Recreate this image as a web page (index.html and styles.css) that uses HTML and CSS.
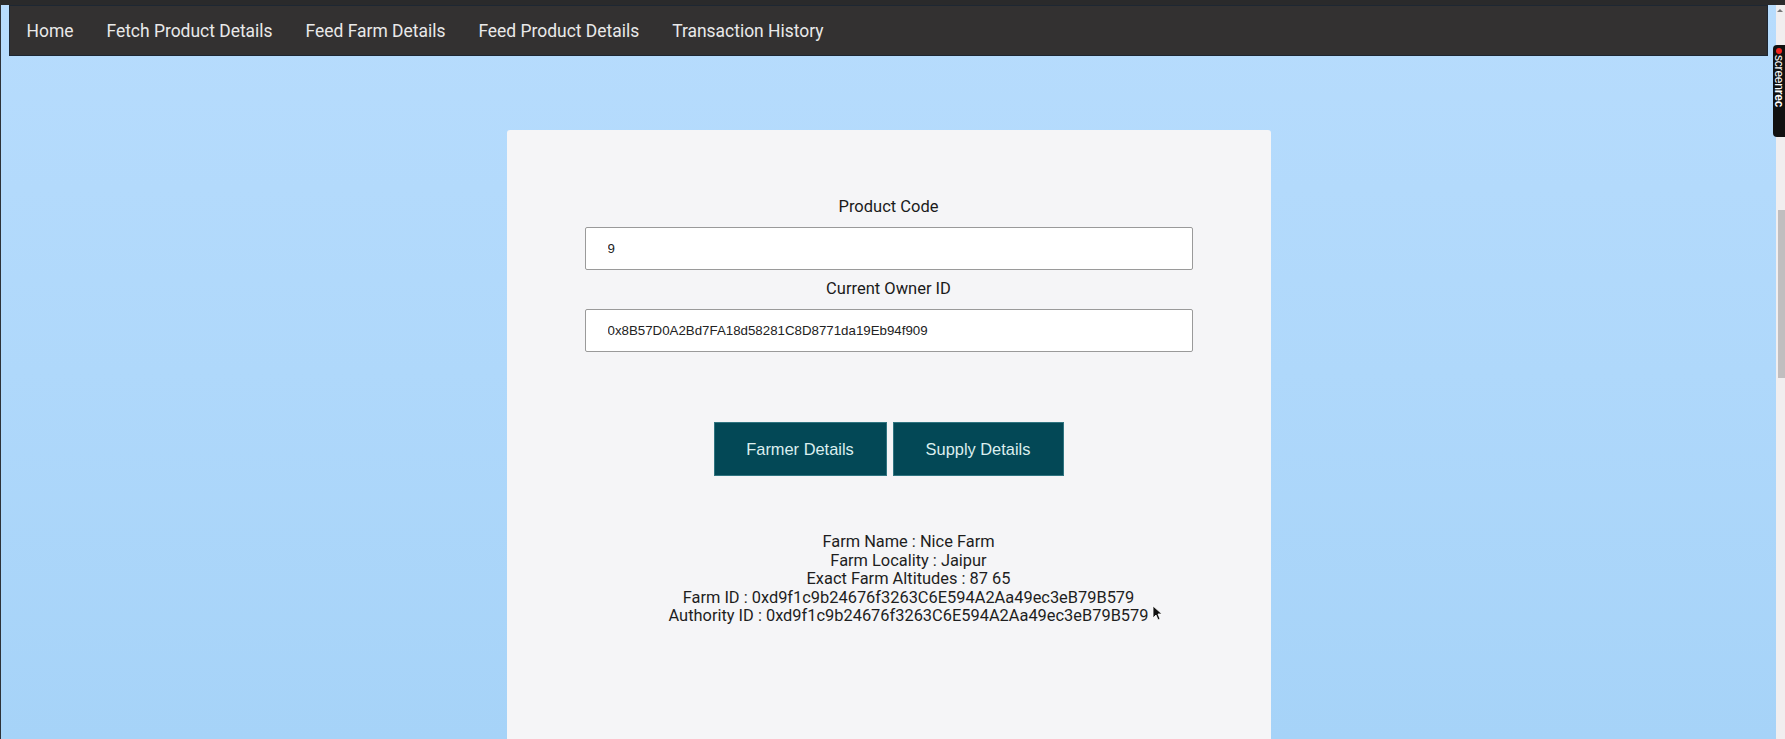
FILE: index.html
```html
<!DOCTYPE html>
<html lang="en">
<head>
<meta charset="utf-8">
<title>Farm Details</title>
<link rel="stylesheet" href="styles.css">
</head>
<body>
<div class="topstrip"></div>
<div class="window">
  <main class="page">
    <nav class="navbar">
      <a class="nav-link" href="#">Home</a>
      <a class="nav-link" href="#">Fetch Product Details</a>
      <a class="nav-link" href="#">Feed Farm Details</a>
      <a class="nav-link" href="#">Feed Product Details</a>
      <a class="nav-link" href="#">Transaction History</a>
    </nav>
    <section class="card">
      <form class="form">
        <label class="field-label" for="code">Product Code</label>
        <input class="field-input" id="code" type="text" value="9" readonly>
        <label class="field-label gap" for="owner">Current Owner ID</label>
        <input class="field-input" id="owner" type="text" value="0x8B57D0A2Bd7FA18d58281C8D8771da19Eb94f909" readonly>
      </form>
      <div class="actions">
        <button class="btn btn-farmer" type="button">Farmer Details</button>
        <button class="btn btn-supply" type="button">Supply Details</button>
      </div>
      <div class="info">
        <div class="info-line">Farm Name : Nice Farm</div>
        <div class="info-line">Farm Locality : Jaipur</div>
        <div class="info-line">Exact Farm Altitudes : 87 65</div>
        <div class="info-line">Farm ID : 0xd9f1c9b24676f3263C6E594A2Aa49ec3eB79B579</div>
        <div class="info-line">Authority ID : 0xd9f1c9b24676f3263C6E594A2Aa49ec3eB79B579<svg class="cursor" width="10" height="16" viewBox="0 0 10 16"><path d="M1 1 L1 13 L4 10 L6 15 L8 14 L6 9 L10 9 Z" fill="#111" stroke="#fff" stroke-width="0.8"/></svg></div>
      </div>
    </section>
  </main>
  <div class="scrollbar">
    <span class="scroll-arrow"></span>
    <span class="scroll-thumb"></span>
  </div>
</div>
<div class="badge"><span class="badge-dot"></span><span class="badge-text">screen<b>rec</b></span></div>
</body>
</html>
```

FILE: styles.css
```css
html, body {
  margin: 0;
  padding: 0;
  height: 100%;
  overflow: hidden;
}

body {
  background: #2b2b2b;
  font-family: Roboto, "Liberation Sans", Arial, sans-serif;
  display: flex;
  flex-direction: column;
}

.topstrip {
  height: 5px;
  flex: none;
  background: #2a2a2b;
}

.window {
  flex: 1;
  display: flex;
  min-height: 0;
}

.page {
  flex: 1;
  min-width: 0;
  overflow: hidden;
  border-left: 1px solid #2d3238;
  background: linear-gradient(180deg, #b7dcfd 0%, #afd8fb 50%, #a6d3f8 100%);
  padding: 0 8px 0 8px;
  display: flex;
  flex-direction: column;
}

.navbar {
  flex: none;
  height: 49px;
  display: flex;
  align-items: center;
  background: #333131;
  border: 1px solid #1e2732;
}

.nav-link {
  color: #e9e9e9;
  text-decoration: none;
  font-size: 17.45px;
  padding: 0 16.5px;
  line-height: 20px;
  margin-top: 1px;
}

.card {
  flex: none;
  width: 764px;
  height: 700px;
  margin: 74px auto 0;
  background: #f5f5f7;
  border-radius: 3px;
  box-sizing: border-box;
  padding-top: 67px;
  display: flex;
  flex-direction: column;
  align-items: center;
}

.form {
  display: flex;
  flex-direction: column;
  align-items: center;
  margin: 0;
}

.field-label {
  font-size: 16.5px;
  line-height: 20px;
  color: #1b1b1b;
}

.field-label.gap {
  margin-top: 9px;
}

.field-input {
  margin-top: 10px;
  width: 608px;
  height: 43px;
  box-sizing: border-box;
  border: 1px solid #9a9a9a;
  border-radius: 2px;
  background: #ffffff;
  padding: 0 0 0 22px;
  font-family: "Liberation Sans", Arial, sans-serif;
  font-size: 13.3px;
  color: #222;
  outline: none;
}

.actions {
  margin-top: 70px;
  display: flex;
  gap: 6px;
}

.btn {
  height: 54px;
  border: 1px solid #2f7480;
  background: #034856;
  color: #dcefef;
  font-family: "Liberation Sans", Arial, sans-serif;
  font-size: 16.4px;
  padding: 0;
  cursor: pointer;
}

.btn-farmer {
  width: 173px;
}

.btn-supply {
  width: 171px;
}

.info {
  margin-top: 57px;
  padding-left: 40px;
  display: flex;
  flex-direction: column;
  align-items: center;
  font-size: 16.4px;
  line-height: 18.6px;
  color: #1e1e1e;
}

.info-line {
  position: relative;
  white-space: nowrap;
}

.cursor {
  position: absolute;
  right: -13px;
  top: -2px;
}

.scrollbar {
  flex: none;
  width: 9px;
  background: #f1eeef;
  display: flex;
  flex-direction: column;
  align-items: flex-end;
}

.scroll-arrow {
  margin: 4px 2px 0 0;
  width: 0;
  height: 0;
  border-left: 3px solid transparent;
  border-right: 3px solid transparent;
  border-bottom: 3px solid #777;
}

.scroll-thumb {
  margin-top: 198px;
  width: 7px;
  height: 168px;
  background: #c1bebf;
}

.badge {
  position: absolute;
  left: 1773px;
  top: 45px;
  width: 12px;
  height: 92px;
  background: #111;
  border-radius: 4px 0 0 4px;
  display: flex;
  flex-direction: column;
  align-items: center;
}

.badge-dot {
  margin-top: 3px;
  width: 6px;
  height: 6px;
  border-radius: 50%;
  background: #f2261f;
  flex: none;
}

.badge-text {
  writing-mode: vertical-rl;
  font-family: "Liberation Sans", Arial, sans-serif;
  font-size: 12px;
  line-height: 12px;
  color: #ffffff;
  margin-top: 1px;
  letter-spacing: -0.2px;
}

.badge-text b {
  font-weight: 700;
}
```
